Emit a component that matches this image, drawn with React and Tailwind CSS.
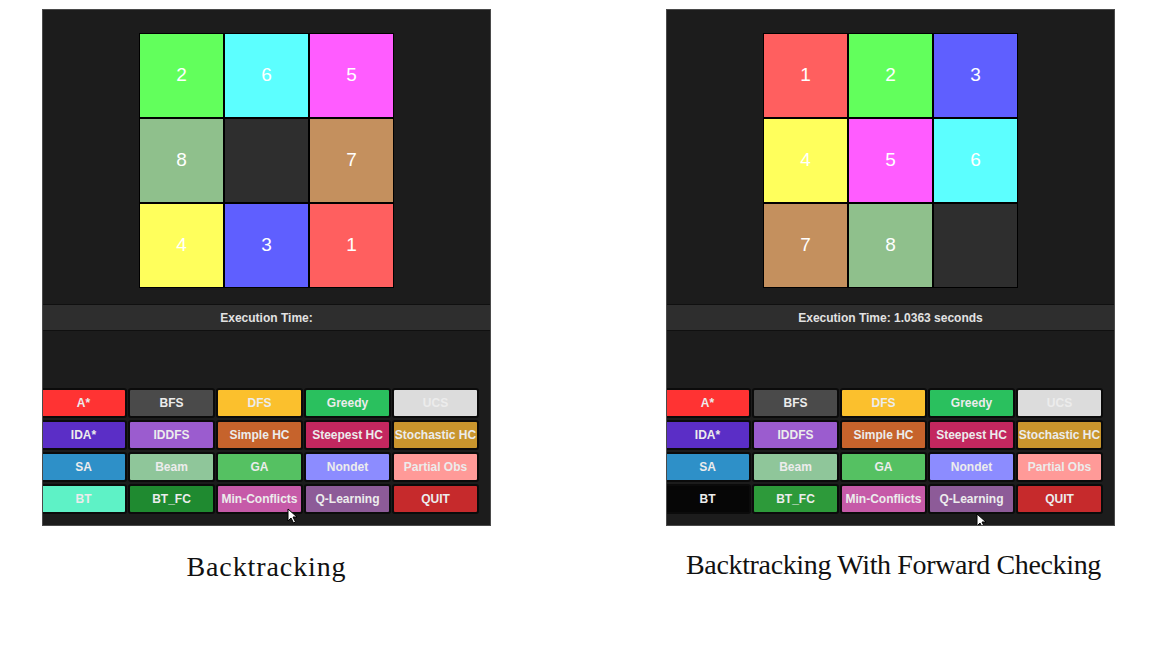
import React from 'react';

const tileColors = {
  1: 'bg-[#ff5f5f]',
  2: 'bg-[#62ff5c]',
  3: 'bg-[#5f5fff]',
  4: 'bg-[#ffff5c]',
  5: 'bg-[#ff5cff]',
  6: 'bg-[#5cffff]',
  7: 'bg-[#c4905e]',
  8: 'bg-[#8fc08c]',
  0: 'bg-[#2e2e2e]',
};

const buttonRows = (bt, btfc) => [
  [
    ['A*', 'bg-[#ff3333]'],
    ['BFS', 'bg-[#4a4a4a]'],
    ['DFS', 'bg-[#fbc02d]'],
    ['Greedy', 'bg-[#2ac05e]'],
    ['UCS', 'bg-[#dcdcdc]'],
  ],
  [
    ['IDA*', 'bg-[#5b2ec6]'],
    ['IDDFS', 'bg-[#9b5ccf]'],
    ['Simple HC', 'bg-[#c6632c]'],
    ['Steepest HC', 'bg-[#c3275f]'],
    ['Stochastic HC', 'bg-[#c9952d]'],
  ],
  [
    ['SA', 'bg-[#2e90c8]'],
    ['Beam', 'bg-[#8fc69a]'],
    ['GA', 'bg-[#55c162]'],
    ['Nondet', 'bg-[#8c8cff]'],
    ['Partial Obs', 'bg-[#ff9a98]'],
  ],
  [
    ['BT', bt],
    ['BT_FC', btfc],
    ['Min-Conflicts', 'bg-[#c65aa8]'],
    ['Q-Learning', 'bg-[#8d5b98]'],
    ['QUIT', 'bg-[#c62a2c]'],
  ],
];

function Cursor({ className }) {
  return (
    <svg className={className} width="11" height="16" viewBox="0 0 11 16">
      <path d="M1 1 L1 13 L4 10 L6.5 15 L8.5 14 L6 9 L10 9 Z" fill="#fff" stroke="#000" strokeWidth="1" strokeLinejoin="round" />
    </svg>
  );
}

function Panel({ tiles, time, bt, btfc, cursorClass }) {
  return (
    <div className="relative w-[449px] h-[517px] bg-[#1c1c1c] border border-[#4a4a4a] overflow-hidden flex flex-col items-center pt-[23px]">
      <div className="grid grid-cols-3 gap-[2px] p-[1px] bg-black">
        {tiles.map((n, i) => (
          <div
            key={i}
            className={`w-[83px] h-[83px] flex items-center justify-center text-white text-[19px] ${tileColors[n]}`}
          >
            {n !== 0 ? n : ''}
          </div>
        ))}
      </div>

      <div className="mt-[16px] w-full h-[27px] bg-[#2e2e2e] border-y border-[#101010] flex items-center justify-center text-[12px] font-bold text-[#e2e2e2]">
        {time}
      </div>

      <div className="mt-[57px] self-start ml-[-3px] grid grid-cols-5 gap-x-[1px] gap-y-[2px]">
        {buttonRows(bt, btfc).flat().map(([label, bg]) => (
          <div
            key={label}
            className={`w-[87px] h-[30px] border-2 border-[#0b0b0b] rounded-[3px] flex items-center justify-center text-[12px] font-bold text-[#ececec] whitespace-nowrap ${bg}`}
          >
            {label}
          </div>
        ))}
      </div>

      <Cursor className={cursorClass} />
    </div>
  );
}

export default function App() {
  return (
    <div className="w-[1152px] h-[648px] bg-white flex pl-[42px] pt-[9px] gap-[175px] font-['Liberation_Sans',Arial,sans-serif]">
      <div className="flex flex-col items-center">
        <Panel
          tiles={[2, 6, 5, 8, 0, 7, 4, 3, 1]}
          time="Execution Time:"
          bt="bg-[#5ef2c6]"
          btfc="bg-[#1f8a30]"
          cursorClass="absolute left-[244px] top-[498px]"
        />
        <div className="mt-[24px] text-[28px] leading-[34px] tracking-[0.9px] text-[#111] font-['Liberation_Serif',serif]">
          Backtracking
        </div>
      </div>
      <div className="flex flex-col items-center">
        <Panel
          tiles={[1, 2, 3, 4, 5, 6, 7, 8, 0]}
          time="Execution Time: 1.0363 seconds"
          bt="bg-[#060606]"
          btfc="bg-[#2d9a3a]"
          cursorClass="absolute left-[309px] top-[503px]"
        />
        <div className="mt-[22px] ml-[6px] text-[28px] leading-[34px] tracking-[-0.35px] text-[#111] font-['Liberation_Serif',serif]">
          Backtracking With Forward Checking
        </div>
      </div>
    </div>
  );
}
